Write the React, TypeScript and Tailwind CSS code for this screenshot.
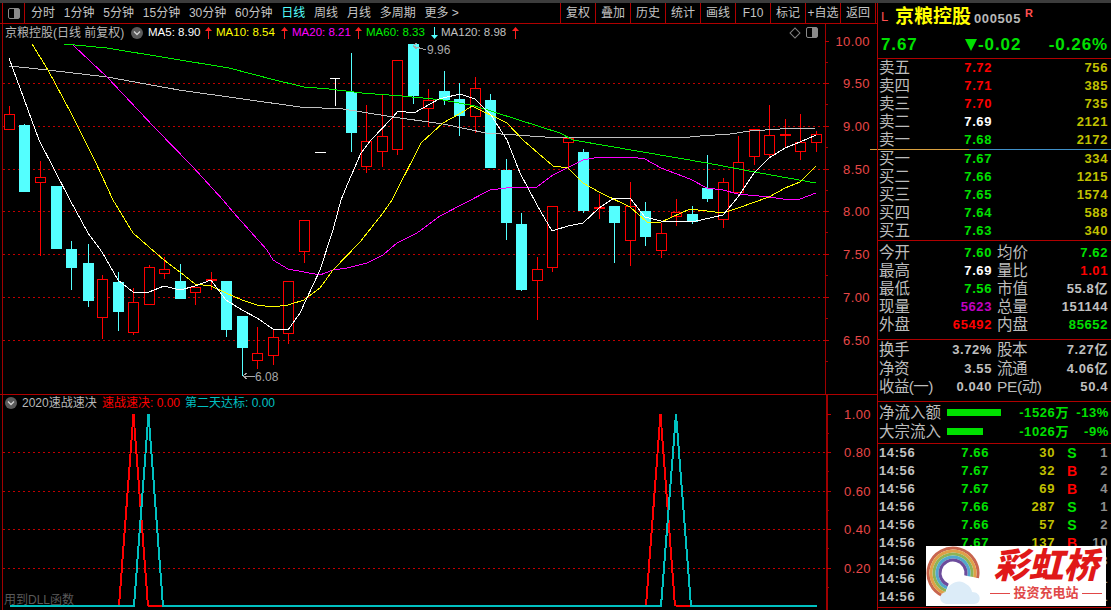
import React from 'react';

// [x, high, low, bodyTop, bodyBottom, kind]  c = falling (filled cyan), r = rising (hollow red)
type Candle = [number, number, number, number, number, 'c' | 'r'];

const candles: Candle[] = [
  [9, 106, 130, 114, 130, 'r'], [24, 124, 192, 125, 192, 'c'], [40, 161, 256, 177, 183, 'r'],
  [56, 186, 249, 186, 249, 'c'], [71, 241, 290, 249, 268, 'c'], [88, 244, 307, 263, 301, 'c'],
  [102, 275, 339, 279, 318, 'r'], [118, 272, 331, 282, 312, 'c'], [133, 288, 335, 302, 333, 'r'],
  [149, 265, 305, 267, 305, 'r'], [164, 257, 279, 269, 274, 'r'], [180, 264, 299, 281, 299, 'c'],
  [195, 287, 305, 287, 293, 'r'], [211, 272, 290, 279, 281, 'r'], [226, 281, 337, 281, 330, 'c'],
  [242, 316, 376, 316, 348, 'c'], [257, 327, 369, 353, 361, 'r'], [273, 329, 365, 337, 356, 'r'],
  [288, 281, 344, 281, 334, 'r'], [304, 220, 263, 220, 252, 'r'],
  [351, 53, 152, 92, 133, 'c'], [366, 105, 173, 141, 167, 'r'], [382, 95, 167, 136, 152, 'r'],
  [397, 60, 155, 60, 150, 'r'], [413, 44, 104, 44, 96, 'c'], [428, 89, 127, 100, 109, 'r'],
  [444, 71, 105, 91, 100, 'c'], [459, 83, 136, 99, 116, 'c'], [475, 77, 133, 88, 117, 'r'],
  [490, 94, 168, 100, 168, 'c'], [506, 159, 240, 170, 223, 'c'], [521, 213, 291, 224, 290, 'c'],
  [537, 257, 320, 269, 281, 'r'], [552, 206, 272, 206, 268, 'r'], [568, 138, 168, 138, 143, 'r'],
  [583, 149, 213, 152, 211, 'c'], [599, 194, 219, 207, 209, 'r'], [614, 206, 263, 206, 223, 'c'],
  [630, 182, 266, 206, 241, 'r'], [645, 202, 246, 211, 237, 'c'], [661, 223, 258, 233, 251, 'r'],
  [676, 199, 226, 212, 217, 'r'], [692, 206, 224, 214, 222, 'c'], [707, 155, 202, 188, 199, 'c'],
  [723, 178, 228, 182, 220, 'r'], [738, 136, 193, 162, 193, 'r'], [754, 129, 165, 129, 157, 'r'],
  [769, 105, 157, 135, 155, 'r'], [785, 119, 148, 134, 136, 'r'], [800, 114, 160, 142, 152, 'r'],
  [816, 131, 152, 134, 143, 'r'],
];

const ma5 = '9,58 39,140 70,200 88,233 102,252 118,280 133,292 149,292 164,286 180,290 195,286 211,280 226,300 242,310 257,318 273,329 288,330 300,313 320,270 333,230 341,200 348,183 361,153 371,140 393,117 398,111 414,113 439,99 460,94 475,99 491,115 507,140 520,173 537,205 552,231 568,226 583,223 599,208 614,198 630,198 645,217 661,221 692,222 723,215 738,197 754,173 769,158 785,148 800,142 816,135';
const ma10 = '32,44 48,70 71,113 96,163 113,200 133,233 149,247 164,260 180,272 195,284 211,286 226,293 242,300 257,305 273,307 288,305 304,300 320,288 333,270 360,242 383,213 392,200 421,143 443,123 461,113 472,106 507,123 523,140 553,166 568,168 583,183 599,192 630,207 647,222 661,222 690,209 723,213 738,208 769,197 785,188 800,182 816,166';
const ma20 = '73,45 107,77 154,127 193,167 223,200 233,212 267,250 273,260 288,269 320,275 333,270 347,268 367,263 383,255 397,243 417,233 440,216 490,190 506,188 521,187 537,187 553,175 583,160 599,157 630,157 645,159 661,168 690,179 707,188 723,190 738,194 769,197 783,199 800,199 816,193';
const ma60 = '64,44 75,45 107,48 168,58 229,68 275,80 304,87 329,89 362,93 402,96 443,100 475,106 560,133 573,140 707,163 760,173 816,183';
const ma120 = '9,66 48,70 107,77 179,90 250,100 300,107 343,109 393,117 443,124 486,133 560,138 573,137 668,137 680,138 700,136 730,134 750,131 780,129 816,128';

const priceAxis: [string, number][] = [
  ['10.00', 41], ['9.50', 83], ['9.00', 126], ['8.50', 169], ['8.00', 211], ['7.50', 254], ['7.00', 297], ['6.50', 340],
];
const indAxis: [string, number][] = [['1.00', 414], ['0.80', 452], ['0.60', 491], ['0.40', 529], ['0.20', 568]];

const leftTabs = ['分时', '1分钟', '5分钟', '15分钟', '30分钟', '60分钟', '日线', '周线', '月线', '多周期', '更多 >'];
const rightTabs = ['复权', '叠加', '历史', '统计', '画线', 'F10', '标记', '+自选', '返回'];

const sells = [
  ['卖五', '7.72', '756', 'text-[#ff0000]'],
  ['卖四', '7.71', '385', 'text-[#ff0000]'],
  ['卖三', '7.70', '735', 'text-[#ff0000]'],
  ['卖二', '7.69', '2121', 'text-white'],
  ['卖一', '7.68', '2172', 'text-[#00e000]'],
];
const buys = [
  ['买一', '7.67', '334'], ['买二', '7.66', '1215'], ['买三', '7.65', '1574'], ['买四', '7.64', '588'], ['买五', '7.63', '340'],
];
const gray = 'text-[#c0c0c0]';
const green = 'text-[#00e000]';
const red = 'text-[#ff0000]';
const stats = [
  ['今开', '7.60', green, '均价', '7.62', green],
  ['最高', '7.69', 'text-white', '量比', '1.01', red],
  ['最低', '7.56', green, '市值', '55.8亿', gray],
  ['现量', '5623', 'text-[#c000c0]', '总量', '151144', gray],
  ['外盘', '65492', red, '内盘', '85652', green],
];
const stats2 = [
  ['换手', '3.72%', '股本', '7.27亿'],
  ['净资', '3.55', '流通', '4.06亿'],
  ['收益(一)', '0.040', 'PE(动)', '50.4'],
];
// the last three rows sit under the logo, only time and count show
const ticks = [
  ['7.66', '30', 'S', '1'], ['7.67', '32', 'B', '2'], ['7.67', '69', 'B', '4'], ['7.66', '287', 'S', '1'], ['7.66', '57', 'S', '2'],
  ['7.67', '137', 'B', '10'], ['', '', '', '3'], ['', '', '', '1'], ['', '', '', '1'],
];

const CandleMark: React.FC<{ c: Candle }> = ({ c }) => {
  const [x, hi, lo, top, bot, kind] = c;
  if (kind === 'c') {
    return (
      <g>
        <line x1={x + 0.5} x2={x + 0.5} y1={hi} y2={lo} stroke="#54ffff" />
        <rect x={x - 5} y={top} width={11} height={bot - top} fill="#54ffff" />
      </g>
    );
  }
  return (
    <g stroke="#ff0000">
      <line x1={x + 0.5} x2={x + 0.5} y1={hi} y2={top} />
      <line x1={x + 0.5} x2={x + 0.5} y1={bot} y2={lo} />
      <rect x={x - 4.5} y={top + 0.5} width={10} height={Math.max(bot - top - 1, 1)} fill="#000000" />
    </g>
  );
};

const UpArrow = () => (
  <svg width="7" height="12" viewBox="0 0 7 12" className="shrink-0">
    <path d="M3.5 0 L7 4 L4 4 L4 12 L3 12 L3 4 L0 4 Z" fill="#ff2020" />
  </svg>
);
const DownArrow = () => (
  <svg width="7" height="12" viewBox="0 0 7 12" className="shrink-0">
    <path d="M3.5 12 L7 8 L4 8 L4 0 L3 0 L3 8 L0 8 Z" fill="#54ffff" />
  </svg>
);
const Chevron = () => (
  <svg width="12" height="12" viewBox="0 0 12 12" className="shrink-0">
    <circle cx="6" cy="6" r="6" fill="#5a5a5a" />
    <path d="M3 4.5 L6 7.5 L9 4.5" stroke="#d0d0d0" strokeWidth="1.4" fill="none" />
  </svg>
);

const MainChart = () => (
  <svg width="877" height="370" viewBox="0 24 877 370" className="block" shapeRendering="crispEdges">
    {[83, 126, 169, 211, 254, 297, 340].map(y => (
      <line key={y} x1="3" x2="825" y1={y + 0.5} y2={y + 0.5} stroke="#c00000" strokeDasharray="2 3" />
    ))}
    <line x1="2.5" x2="2.5" y1="24" y2="394" stroke="#a00000" />
    <line x1="825.5" x2="825.5" y1="24" y2="394" stroke="#a00000" />
    {priceAxis.map(([label, y]) => (
      <g key={label}>
        <line x1="825" x2="829" y1={y + 0.5} y2={y + 0.5} stroke="#c00000" />
        <line x1="825" x2="828" y1={y + 21.5} y2={y + 21.5} stroke="#a00000" />
        <text x="870" y={y + 5} textAnchor="end" fontSize="13" fill="#e84848" shapeRendering="auto" letterSpacing="0.4">{label}</text>
      </g>
    ))}
    <line x1="870" x2="877" y1="149.5" y2="149.5" stroke="#d8a040" />

    {/* flat days without a body */}
    <line x1="315" x2="326" y1="152.5" y2="152.5" stroke="#ffffff" />
    <line x1="330" x2="340" y1="78.5" y2="78.5" stroke="#ffffff" />
    <line x1="335.5" x2="335.5" y1="78" y2="106" stroke="#ffffff" />

    {candles.map(c => <CandleMark key={c[0]} c={c} />)}

    <polyline points={ma120} fill="none" stroke="#c0c0c0" />
    <polyline points={ma60} fill="none" stroke="#00f000" />
    <polyline points={ma20} fill="none" stroke="#ff00ff" />
    <polyline points={ma10} fill="none" stroke="#ffff00" />
    <polyline points={ma5} fill="none" stroke="#ffffff" />

    <g stroke="#a8a8a8" fill="none">
      <path d="M413 46 L426 50 M413 46 L417 43 M413 46 L417 49" />
      <path d="M243 376 L255 376 M243 376 L247 373 M243 376 L247 379" />
    </g>
    <text x="427" y="54" fontSize="12" fill="#a8a8a8" shapeRendering="auto">9.96</text>
    <text x="255" y="381" fontSize="12" fill="#a8a8a8" shapeRendering="auto">6.08</text>
  </svg>
);

const peak = (a: number) => `${a},606 ${a + 14.5},414 ${a + 29},606`;

const IndicatorChart = () => (
  <svg width="877" height="215" viewBox="0 395 877 215" className="block" shapeRendering="crispEdges">
    {[452, 491, 529, 568].map(y => (
      <line key={y} x1="3" x2="826" y1={y + 0.5} y2={y + 0.5} stroke="#c00000" strokeDasharray="2 3" />
    ))}
    <line x1="2.5" x2="2.5" y1="395" y2="610" stroke="#a00000" />
    <line x1="826.5" x2="826.5" y1="395" y2="610" stroke="#a00000" strokeWidth="2" />
    {indAxis.map(([label, y]) => (
      <g key={label}>
        <line x1="827" x2="831" y1={y + 0.5} y2={y + 0.5} stroke="#c00000" />
        <line x1="827" x2="829" y1={y + 19.5} y2={y + 19.5} stroke="#a00000" />
        <text x="871" y={y + 5} textAnchor="end" fontSize="13" fill="#e84848" shapeRendering="auto" letterSpacing="0.4">{label}</text>
      </g>
    ))}
    <polyline points={peak(119)} fill="none" stroke="#ff0000" strokeWidth="2" />
    <polyline points={peak(646)} fill="none" stroke="#ff0000" strokeWidth="2" />
    <line x1="148" x2="164" y1="606" y2="606" stroke="#ff0000" strokeWidth="2" />
    <line x1="676" x2="691" y1="606" y2="606" stroke="#ff0000" strokeWidth="2" />
    <polyline
      points="10,606 134,606 148.5,414 163,606 661,606 676,414 691,606 817,606"
      fill="none"
      stroke="#00c0c0"
      strokeWidth="2"
    />
  </svg>
);

const rainbow: [string, number][] = [['#c8654e', 25], ['#e0a048', 22], ['#8eb455', 19], ['#52a8cc', 16], ['#6c4c9c', 13]];

const Logo = () => (
  <div className="absolute right-[5px] bottom-[1px] flex h-[60px] w-[180px] bg-white">
    <svg width="60" height="60" viewBox="0 0 60 60" className="shrink-0">
      {rainbow.map(([color, r]) => (
        <path
          key={color}
          d={`M${27 - r * 0.37} ${27 + r * 0.93} A${r} ${r} 0 1 1 ${27 + r * 0.98} ${27 + r * 0.2}`}
          fill="none"
          stroke={color}
          strokeWidth="3"
        />
      ))}
      <path d="M22 58 C12 58 12 47 20 46 C22 37 34 32 40 38 C44 40 46 44 46 46 C56 46 56 58 48 58 Z" fill="#dcecf8" />
    </svg>
    <div className="flex min-w-0 flex-1 flex-col items-center">
      <div className="h-[39px] text-[35px] leading-[39px] font-black whitespace-nowrap text-[#e01818] italic">彩虹桥</div>
      <div className="flex items-center gap-[3px] text-[13px] leading-[16px] font-bold text-[#e04848]">
        <span className="h-px w-[20px] bg-[#e04848]" />
        投资充电站
        <span className="h-px w-[20px] bg-[#e04848]" />
      </div>
    </div>
  </div>
);

const num = 'font-bold text-[13px] tracking-[0.6px] leading-[18px] whitespace-nowrap';
const label = 'text-[15.5px] leading-[18px] text-[#bcbcbc] font-normal whitespace-nowrap';

const SidePanel = () => (
  <div className="flex w-[234px] shrink-0 flex-col border-l border-[#b00000]">
    {/* title */}
    <div className="h-[56px] shrink-0 border-b border-[#b00000] pl-[3px]">
      <div className="flex h-[28px] items-center">
        <span className="w-[14px] text-[13px] text-[#ff5050]">L</span>
        <span className="text-[19px] leading-[28px] font-bold text-[#ffff00]">京粮控股</span>
        <span className="ml-[3px] pt-[3px] text-[13px] font-bold tracking-[0.6px] text-[#b8b8b8]">000505</span>
        <span className="mb-[8px] ml-[4px] text-[11px] font-bold text-[#ff5050]">R</span>
      </div>
      <div className="flex h-[27px] items-center pr-[3px] text-[17px] font-bold tracking-[0.9px] text-[#00e000]">
        <span className="w-[84px]">7.67</span>
        <span className="flex items-center">
          <span className="mr-px h-0 w-0 border-x-[6px] border-t-[12px] border-x-transparent border-t-[#00e000]" />
          -0.02
        </span>
        <span className="ml-auto">-0.26%</span>
      </div>
    </div>

    {/* order book */}
    <div className="h-[90px] shrink-0 pl-px">
      {sells.map(([name, price, vol, color]) => (
        <div key={name} className="flex h-[18px] items-center pr-[3px]">
          <span className={`w-[50px] ${label}`}>{name}</span>
          <span className={`w-[63px] text-right ${num} ${color}`}>{price}</span>
          <span className={`flex-1 text-right ${num} text-[#c0c000]`}>{vol}</span>
        </div>
      ))}
    </div>
    <div className="flex h-px shrink-0">
      <div className="w-[91px] bg-[#d8a040]" />
      <div className="flex-1 bg-[#4090c8]" />
    </div>
    <div className="h-[91px] shrink-0 border-b border-[#b00000] pl-px">
      {buys.map(([name, price, vol]) => (
        <div key={name} className="flex h-[18px] items-center pr-[3px]">
          <span className={`w-[50px] ${label}`}>{name}</span>
          <span className={`w-[63px] text-right ${num} ${green}`}>{price}</span>
          <span className={`flex-1 text-right ${num} text-[#c0c000]`}>{vol}</span>
        </div>
      ))}
    </div>

    {/* stats */}
    <div className="h-[99px] shrink-0 border-b border-[#b00000] pt-[3px] pl-px">
      {stats.map(([a, av, ac, b, bv, bc]) => (
        <div key={a} className="flex h-[18px] items-center pr-[3px]">
          <span className={`w-[50px] ${label}`}>{a}</span>
          <span className={`w-[63px] text-right ${num} ${ac}`}>{av}</span>
          <span className={`ml-[5px] w-[40px] ${label}`}>{b}</span>
          <span className={`flex-1 text-right ${num} ${bc}`}>{bv}</span>
        </div>
      ))}
    </div>
    <div className="h-[62px] shrink-0 border-b border-[#b00000] pt-px pl-px">
      {stats2.map(([a, av, b, bv]) => (
        <div key={a} className="flex h-[18.5px] items-center pr-[3px]">
          <span className={`w-[50px] ${label} tracking-[-0.6px]`}>{a}</span>
          <span className={`w-[63px] text-right ${num} ${gray}`}>{av}</span>
          <span className={`ml-[5px] w-[40px] ${label} tracking-[-0.4px]`}>{b}</span>
          <span className={`flex-1 text-right ${num} ${gray}`}>{bv}</span>
        </div>
      ))}
    </div>

    {/* money flow */}
    <div className="h-[42px] shrink-0 border-b border-[#b00000] pt-px pl-px">
      <div className="flex h-[19px] items-center pr-[2px]">
        <span className={`w-[68px] ${label}`}>净流入额</span>
        <span className="h-[7px] w-[54px] bg-[#00e000]" />
        <span className={`w-[68px] text-right ${num} ${green}`}>-1526万</span>
        <span className={`flex-1 text-right ${num} ${green}`}>-13%</span>
      </div>
      <div className="flex h-[19px] items-center pr-[2px]">
        <span className={`w-[68px] ${label}`}>大宗流入</span>
        <span className="h-[7px] w-[36px] bg-[#00e000]" />
        <span className={`ml-[18px] w-[68px] text-right ${num} ${green}`}>-1026万</span>
        <span className={`flex-1 text-right ${num} ${green}`}>-9%</span>
      </div>
    </div>

    {/* tick list */}
    <div className="relative h-[164px] shrink-0 border-b border-[#b00000] pl-px">
      {ticks.map(([price, vol, side, count], i) => (
        <div key={i} className="flex h-[18px] items-center pr-[3px]">
          <span className={`w-[50px] ${num} ${gray}`}>14:56</span>
          <span className={`w-[60px] text-right ${num} ${green}`}>{price}</span>
          <span className={`w-[66px] text-right ${num} text-[#c0c000]`}>{vol}</span>
          <span className={`w-[34px] text-center text-[14px] font-bold ${side === 'S' ? green : red}`}>{side}</span>
          <span className={`flex-1 text-right ${num} text-[#909090]`}>{count}</span>
        </div>
      ))}
      <Logo />
    </div>
  </div>
);

export default function App() {
  return (
    <div className="h-[610px] w-[1111px] overflow-hidden bg-black font-['Liberation_Sans','Noto_Sans_CJK_SC',sans-serif]">
      <div className="h-[3px] bg-[#3c3c3c]" />
      <div className="flex h-[607px]">
        <div className="flex w-[877px] shrink-0 flex-col">
          {/* toolbar */}
          <div className="flex h-[21px] shrink-0 items-stretch border-b border-[#b00000] text-[12px] text-[#c4c4c4]">
            <div className="ml-[2px] flex w-[23px] items-center justify-center border-x border-[#b00000]">
              <span className="flex h-[11px] w-[12px] justify-end rounded-[2px] border border-[#8a8a8a]">
                <span className="w-[5px] bg-[#8a8a8a]" />
              </span>
            </div>
            <div className="flex items-center gap-[8.8px] pl-[6px]">
              {leftTabs.map(t => (
                <span key={t} className={t === '日线' ? 'text-[#54ffff]' : ''}>{t}</span>
              ))}
            </div>
            <div className="ml-auto flex items-stretch">
              {rightTabs.map(t => (
                <span key={t} className="flex w-[35px] items-center justify-center border-l border-[#b00000] whitespace-nowrap">{t}</span>
              ))}
              <span className="w-[2px] border-l border-[#b00000]" />
            </div>
          </div>

          {/* main pane */}
          <div className="relative h-[371px] shrink-0 border-b border-[#b00000]">
            <MainChart />
            <div className="absolute top-[2px] left-[5px] flex h-[14px] items-center text-[12px] whitespace-nowrap text-[#b8b8b8]">
              <span className="w-[126px]">京粮控股(日线 前复权)</span>
              <Chevron />
              <span className="ml-[5px] w-[57px] text-[11.5px] text-white">MA5: 8.90</span>
              <UpArrow />
              <span className="ml-[4px] w-[65px] text-[11.5px] text-[#ffff00]">MA10: 8.54</span>
              <UpArrow />
              <span className="ml-[4px] w-[63px] text-[11.5px] text-[#ff00ff]">MA20: 8.21</span>
              <UpArrow />
              <span className="ml-[4px] w-[65px] text-[11.5px] text-[#00f000]">MA60: 8.33</span>
              <DownArrow />
              <span className="ml-[3px] w-[71px] text-[11.5px] text-[#c0c0c0]">MA120: 8.98</span>
              <UpArrow />
            </div>
            <div className="absolute top-[3px] left-[791px] flex items-center gap-[7px]">
              <span className="block h-[8px] w-[8px] rotate-45 border border-[#808080]" />
              <span className="flex h-[11px] w-[12px] justify-end rounded-[2px] border border-[#8a8a8a]">
                <span className="w-[5px] bg-[#8a8a8a]" />
              </span>
            </div>
          </div>

          {/* indicator pane */}
          <div className="relative flex-1">
            <IndicatorChart />
            <div className="absolute top-px left-[5px] flex h-[14px] items-center text-[12px] whitespace-nowrap">
              <Chevron />
              <span className="ml-[5px] w-[80px] text-[#b8b8b8]">2020速战速决</span>
              <span className="w-[83px] text-[#ff0000]">速战速决: 0.00</span>
              <span className="text-[#00c0c0]">第二天达标: 0.00</span>
            </div>
            <span className="absolute bottom-px left-[4px] text-[12px] text-[#5a5a5a]">用到DLL函数</span>
          </div>
        </div>
        <SidePanel />
      </div>
    </div>
  );
}
